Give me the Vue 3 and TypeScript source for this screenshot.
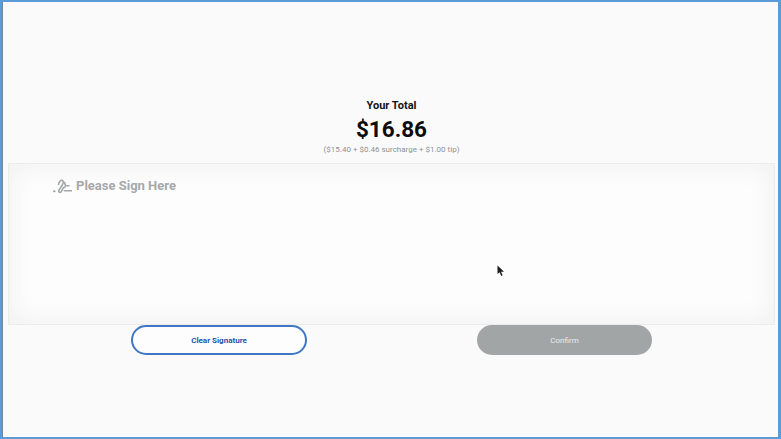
<script setup lang="ts">
const title = 'Your Total'
const total = '$16.86'
const breakdown = '($15.40 + $0.46 surcharge + $1.00 tip)'
</script>

<template>
  <main class="frame">
    <section class="summary">
      <h1 class="title">{{ title }}</h1>
      <p class="total">{{ total }}</p>
      <p class="breakdown">{{ breakdown }}</p>
    </section>
    <section class="pad">
      <div class="hint">
        <svg class="sign" width="19" height="15" viewBox="0 0 19 15" fill="none" stroke="#a4a6a7" stroke-width="1.600" stroke-linecap="round">
          <path d="M1 12.300h.6" stroke-width="2" />
          <path d="M5.500 5.500C6 2.800 7.600 1 9.200 1.300c1.800.4 1.200 3-.2 5.200C7.800 8.500 6 10.400 5.700 12c-.3 1.500 1.200 1.800 2.400.8 1-.9 1.200-2.400 2-3.500.6-.9 1.300-1.300 1.800-1" />
          <path d="M11.500 3.400l1 3" />
          <path d="M12.500 6.800H16" />
          <path d="M11.500 11.700H18.500" />
        </svg>
        <span>Please Sign Here</span>
      </div>
      <svg class="cursor" width="8" height="12" viewBox="0 0 8 12">
        <path d="M0.500 0.500V9L2.600 7.300L4.200 11L5.600 10.300L4 6.800H7Z" fill="#1d1d1f" />
      </svg>
    </section>
    <section class="actions">
      <button class="btn clear" type="button">Clear Signature</button>
      <button class="btn confirm" type="button">Confirm</button>
    </section>
  </main>
</template>

<style scoped>
.frame {
  box-sizing: border-box;
  width: 781px;
  height: 439px;
  border: solid #5b9bd8;
  border-width: 2px 3px 2px 2px;
  background: #fafafa;
  box-shadow: inset 1px 0 0 #77838f;
  padding: 97px 3px 0 6px;
  display: flex;
  flex-direction: column;
  font-family: Roboto, "Liberation Sans", sans-serif;
}
.summary {
  display: flex;
  flex-direction: column;
  align-items: center;
  height: 64px;
}
.title {
  margin: 0;
  font-size: 11px;
  line-height: 14px;
  font-weight: 700;
  color: #141414;
}
.total {
  margin: 2px 0 0;
  font-size: 22.5px;
  line-height: 28px;
  font-weight: 700;
  color: #0d0d0d;
}
.breakdown {
  margin: 1px 0 0;
  font-size: 8px;
  line-height: 12px;
  color: #8f9294;
}
.pad {
  position: relative;
  height: 162px;
  box-sizing: border-box;
  background: #fdfdfd;
  box-shadow: inset 0 0 22px 4px #f1f1f1;
  border: 1px solid #ececec;
  padding: 14px 0 0 44px;
}
.hint {
  display: flex;
  align-items: center;
  gap: 4px;
  font-size: 13px;
  line-height: 16px;
  font-weight: 700;
  color: #a6a8a9;
}
.cursor {
  position: absolute;
  left: 488px;
  top: 101px;
}
.actions {
  display: flex;
  justify-content: space-between;
  padding: 0 123px;
}
.btn {
  height: 30px;
  border-radius: 15px;
  font-family: inherit;
  font-size: 8px;
  padding: 0;
  box-sizing: border-box;
}
.clear {
  width: 176px;
  background: #fdfdfd;
  border: 2px solid #3f77c4;
  color: #1f55ad;
  font-weight: 700;
}
.confirm {
  width: 175px;
  background: #a2a5a6;
  border: 0;
  color: #eceded;
  font-weight: 400;
}
</style>
